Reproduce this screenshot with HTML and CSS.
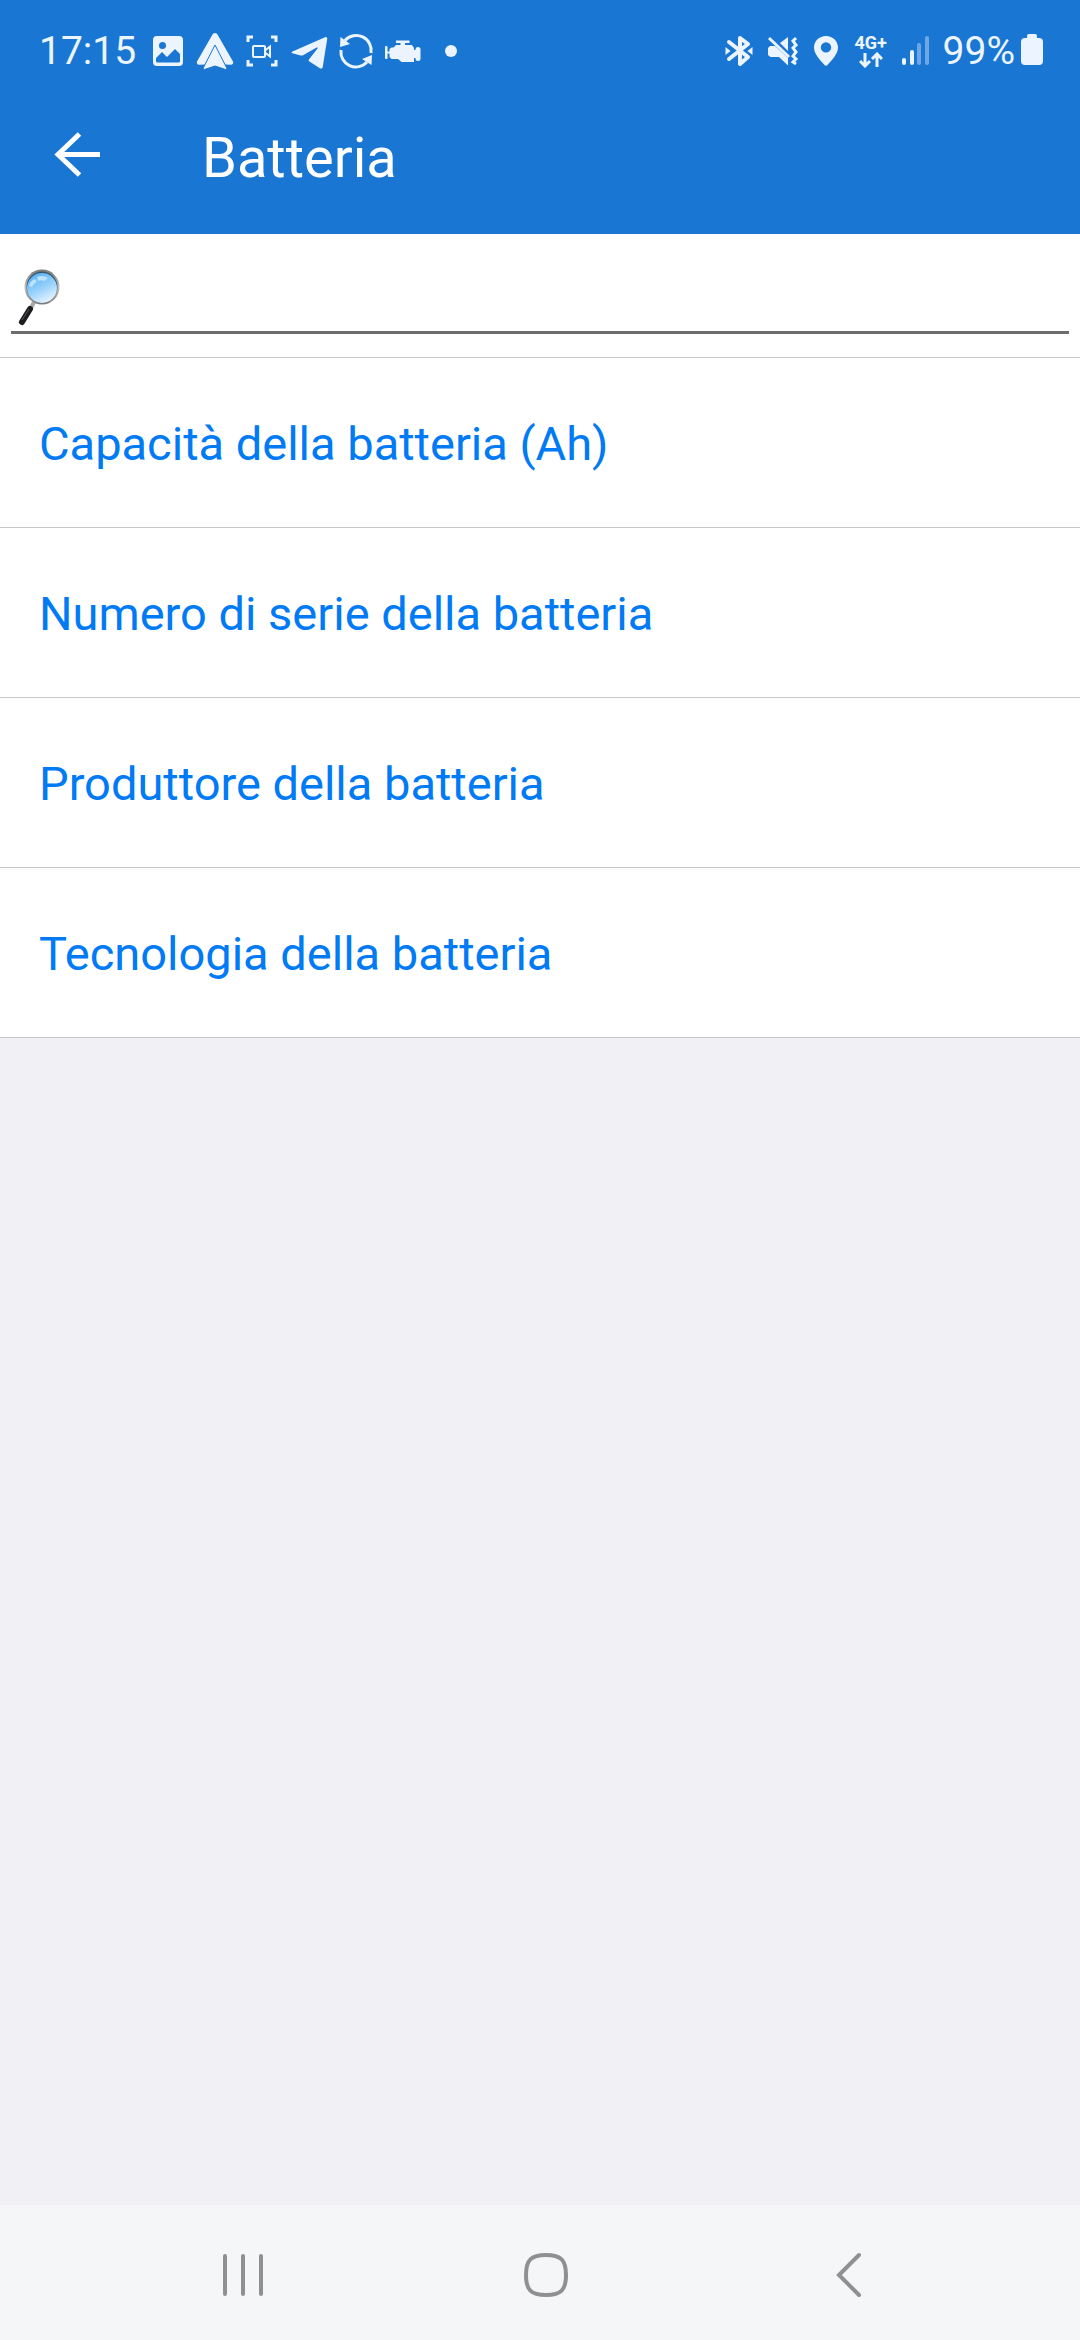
FILE: index.html
```html
<!DOCTYPE html>
<html lang="it">
<head>
<meta charset="utf-8">
<meta name="viewport" content="width=device-width">
<title>Batteria</title>
<link rel="stylesheet" href="styles.css">
</head>
<body>
<header class="top">
  <div class="status">
    <span class="status-text">17:15</span>
    <div class="notifications">
      <svg class="icon" viewBox="0 0 40 40" aria-hidden="true">
        <path fill-rule="evenodd" d="M9 5h22a4 4 0 0 1 4 4v22a4 4 0 0 1-4 4H9a4 4 0 0 1-4-4V9a4 4 0 0 1 4-4zM14.500 11a3.500 3.500 0 1 0 0 7 3.500 3.500 0 0 0 0-7zM8 27v3q0 1.500 1.500 1.500h21Q32 31.500 32 30v-7l-5-5-8 8-5-5z"/>
      </svg>
      <svg class="icon" viewBox="0 0 40 40" aria-hidden="true">
        <path d="M20 2c1.200 0 2 .8 2.600 1.800L38 30.500c.8 1.600-.6 3.500-2.400 3.200L30 33.500 20 18 10 33.500l-5.600.2C2.600 34 1.200 32.100 2 30.500L17.400 3.800C18 2.800 18.800 2 20 2z"/>
        <path class="cutout" d="M20 14 31.500 36.500c.5 1.400-.4 2.300-1.600 1.800L20 35 10.100 38.300c-1.200.5-2.100-.4-1.600-1.800z"/>
      </svg>
      <svg class="icon" viewBox="0 0 40 40" aria-hidden="true">
        <path class="line" d="M11 6H6v5M29 6h5v5M11 34H6v-5M29 34h5v-5"/>
        <rect class="line thin" x="11" y="15" width="12" height="11" rx="1"/>
        <path class="line thin" d="M23 19.500l5-4v10l-5-4"/>
      </svg>
      <svg class="icon" viewBox="0 0 40 40" aria-hidden="true">
        <path d="M3.500 20.500 36 6.300c1.500-.6 2.400.2 2.200 1.700l-4.500 28c-.3 1.600-1.500 2-2.800 1.200L20.500 30.500c-1.100-.8-1.100-1.600-.2-2.600l8.200-10.500c.5-.8-.2-1.300-.9-.8L14.500 24c-1 .6-2 .7-3 .4l-8-2.200c-1.300-.4-1.300-1.200 0-1.700z"/>
      </svg>
      <svg class="icon" viewBox="0 0 40 40" aria-hidden="true">
        <path class="line" d="M9 9.500A15 15 0 0 1 35 22M31 31A15 15 0 0 1 5 19"/>
        <path d="M4.500 6 4 16l10-3zM35.500 34 36 24l-10 4z"/>
      </svg>
      <svg class="icon" viewBox="0 0 40 40" aria-hidden="true">
        <path d="M13 9.500h13.500V12H22v2h7l2 3v14H18.500L15 28H8.500l-2-2v-8l2-1.500h2L13 14h4.500v-2H13z"/>
        <rect x="2" y="15" width="2.500" height="13" rx="1"/>
        <rect x="4" y="20.500" width="3" height="2"/>
        <rect x="30" y="19" width="4" height="8"/>
        <rect x="32.500" y="16" width="5" height="14" rx="2.500"/>
      </svg>
      <svg class="icon" viewBox="0 0 40 40" aria-hidden="true"><circle cx="21" cy="20" r="6"/></svg>
    </div>
    <div class="indicators">
      <svg class="icon" viewBox="0 0 40 40" aria-hidden="true">
        <path class="line thick" d="M10 11l19 15-8 7V7l8 6-19 15"/>
        <path d="M6.500 16l5 4-5 4zM33.500 16l-5 4 5 4z"/>
      </svg>
      <svg class="icon" viewBox="0 0 40 40" aria-hidden="true">
        <path class="line" d="M6 7l20 19"/>
        <path d="M25 6v14l-8-8zM7 15h5l13 12v7.500L16 26H7.500L5 24v-7z"/>
        <path class="line" d="M33 7l-3 3 3 4-3 3 3 4-3 4 3 3-3 3 3 2"/>
      </svg>
      <svg class="icon" viewBox="0 0 40 40" aria-hidden="true">
        <path fill-rule="evenodd" d="M19 5c6.800 0 12 5 12 11.500C31 23 25 29 20.500 34c-1 1-2 1-3 0C13 29 7 23 7 16.500 7 10 12.200 5 19 5zm0 6.200a5.200 5.200 0 1 0 0 10.400 5.200 5.200 0 0 0 0-10.400z"/>
      </svg>
      <div class="network">
        <span>4G+</span>
        <svg class="arrows" viewBox="0 0 24 16" aria-hidden="true">
          <path class="line" d="M6 1v13M1 9l5 5 5-5M18 15V2M13 7l5-5 5 5"/>
        </svg>
      </div>
      <svg class="icon" viewBox="0 0 40 40" aria-hidden="true">
        <rect x="7" y="27" width="4" height="7" rx="2"/>
        <rect x="15" y="19" width="4" height="15" rx="2"/>
        <rect class="dim" x="22" y="12" width="4" height="22" rx="2"/>
        <rect class="dim" x="30" y="5" width="4" height="29" rx="2"/>
      </svg>
    </div>
    <span class="status-text">99%</span>
    <svg class="battery" viewBox="0 0 22 40" aria-hidden="true">
      <path d="M8 3h6a2 2 0 0 1 2 2v2h2a4 4 0 0 1 4 4v19a4 4 0 0 1-4 4H4a4 4 0 0 1-4-4V11a4 4 0 0 1 4-4h2V5a2 2 0 0 1 2-2z"/>
    </svg>
  </div>
  <div class="appbar">
    <button class="back" type="button" aria-label="Indietro">
      <svg viewBox="0 0 48 48" aria-hidden="true"><path d="M26.500 2 5 22.500 26.500 43M5 22.500h42"/></svg>
    </button>
    <h1>Batteria</h1>
  </div>
</header>
<main>
  <div class="search">
    <label class="field">
      <svg class="magnifier" viewBox="0 0 44 58" aria-hidden="true">
        <defs>
          <linearGradient id="glass" x1="0.200" y1="0" x2="0.700" y2="1">
            <stop offset="0" stop-color="#55b0f5"/>
            <stop offset="0.550" stop-color="#9bd3fc"/>
            <stop offset="1" stop-color="#edf6ff"/>
          </linearGradient>
          <linearGradient id="rim" x1="0" y1="0" x2="0" y2="1">
            <stop offset="0" stop-color="#777"/>
            <stop offset="0.500" stop-color="#c4c4c4"/>
            <stop offset="1" stop-color="#777"/>
          </linearGradient>
        </defs>
        <path d="M17 34l-3 6" stroke="#aaa" stroke-width="4"/>
        <path d="M13 41 5 54" stroke="#1d1d1f" stroke-width="6" stroke-linecap="round"/>
        <path d="M12 41 5 52" stroke="#55565a" stroke-width="1"/>
        <circle cx="25" cy="19" r="17.500" fill="url(#rim)"/>
        <circle cx="25" cy="19" r="15.500" fill="#35586f"/>
        <circle cx="25" cy="20" r="15" fill="url(#glass)"/>
        <path d="M12 18c1-4 3-6 6-7l2 3c-3 1-4 3-5 5zM20 9c4-2 8-1 11 1l-4 3c-2-1-4-1-6 0z" fill="#d5edff" opacity=".75"/>
      </svg>
      <input type="search" aria-label="Cerca">
    </label>
  </div>
  <ul class="list">
    <li><a href="#capacita">Capacità della batteria (Ah)</a></li>
    <li><a href="#serie">Numero di serie della batteria</a></li>
    <li><a href="#produttore">Produttore della batteria</a></li>
    <li><a href="#tecnologia">Tecnologia della batteria</a></li>
  </ul>
</main>
<nav class="navbar" aria-label="Sistema">
  <button type="button" aria-label="Recenti"><svg viewBox="0 0 48 48" aria-hidden="true"><path d="M6 5v38M24 5v38M42 5v38"/></svg></button>
  <button type="button" aria-label="Home"><svg viewBox="0 0 48 48" aria-hidden="true"><path d="M24 4C39 4 44 9 44 24S39 44 24 44 4 39 4 24 9 4 24 4z"/></svg></button>
  <button type="button" aria-label="Indietro"><svg viewBox="0 0 48 48" aria-hidden="true"><path d="M34 4 14 24l20 20"/></svg></button>
</nav>
</body>
</html>
```
FILE: styles.css
```css
* {
  box-sizing: border-box;
}

body {
  display: flex;
  flex-direction: column;
  min-height: 100vh;
  margin: 0;
  background: #f0f0f5;
  font-family: Roboto, "Liberation Sans", sans-serif;
}

button {
  display: flex;
  align-items: center;
  justify-content: center;
  padding: 0;
  border: 0;
  background: none;
}

.top {
  background: #1976d3;
}

.status {
  display: flex;
  align-items: center;
  height: 78px;
  padding: 24px 37px 0 39px;
  color: #ecf5ff;
  fill: currentColor;
}

.status-text {
  font-size: 39px;
  line-height: 48px;
}

.notifications {
  display: flex;
  gap: 7px;
  margin-left: 12px;
}

.indicators {
  display: flex;
  gap: 4px;
  margin-left: auto;
  margin-right: 8px;
}

.icon {
  width: 40px;
  height: 40px;
}

.line {
  fill: none;
  stroke: currentColor;
  stroke-width: 3;
}

.thin {
  stroke-width: 2;
}

.thick {
  stroke-width: 4;
  stroke-linejoin: round;
  stroke-linecap: round;
}

.cutout {
  stroke: #1976d3;
  stroke-width: 1;
}

.dim {
  opacity: 0.4;
}

.network {
  display: flex;
  flex-direction: column;
  align-items: center;
  width: 40px;
  padding-top: 3px;
  font-size: 18px;
  font-weight: 700;
  line-height: 18px;
}

.arrows {
  width: 24px;
  height: 16px;
}

.battery {
  width: 22px;
  height: 40px;
  margin-left: 6px;
}

.appbar {
  display: flex;
  align-items: center;
  height: 156px;
  padding-left: 53px;
  color: #fff;
}

.back svg {
  width: 48px;
  height: 48px;
  fill: none;
  stroke: #fff;
  stroke-width: 5;
}

h1 {
  margin: 0 0 0 101px;
  padding-top: 4px;
  font-size: 56px;
  font-weight: 400;
  line-height: 64px;
}

.search {
  padding: 23px 11px;
  background: #fff;
}

.field {
  display: flex;
  align-items: center;
  height: 77px;
  padding: 6px 6px 0;
  border-bottom: 3px solid #6c6c6c;
}

.magnifier {
  flex: none;
  width: 44px;
  height: 58px;
  fill: none;
}

input {
  flex: 1;
  min-width: 0;
  height: 58px;
  padding: 0 8px;
  border: 0;
  outline: 0;
  background: none;
  font: 47px Roboto, sans-serif;
}

.list {
  margin: 0;
  padding: 0;
  border-top: 1px solid #c7c7c9;
  background: #fff;
  list-style: none;
}

.list a {
  display: block;
  padding: 58px 39px 55px;
  border-bottom: 1px solid #c7c7c9;
  color: #007af5;
  font-size: 47px;
  line-height: 56px;
  text-decoration: none;
}

.navbar {
  display: grid;
  grid-template-columns: repeat(3, 1fr);
  height: 135px;
  margin-top: auto;
  padding: 4px 80px 0 92px;
  background: #f5f6f8;
}

.navbar svg {
  width: 48px;
  height: 48px;
  fill: none;
  stroke: #909090;
  stroke-width: 4;
  stroke-linecap: round;
}
```
